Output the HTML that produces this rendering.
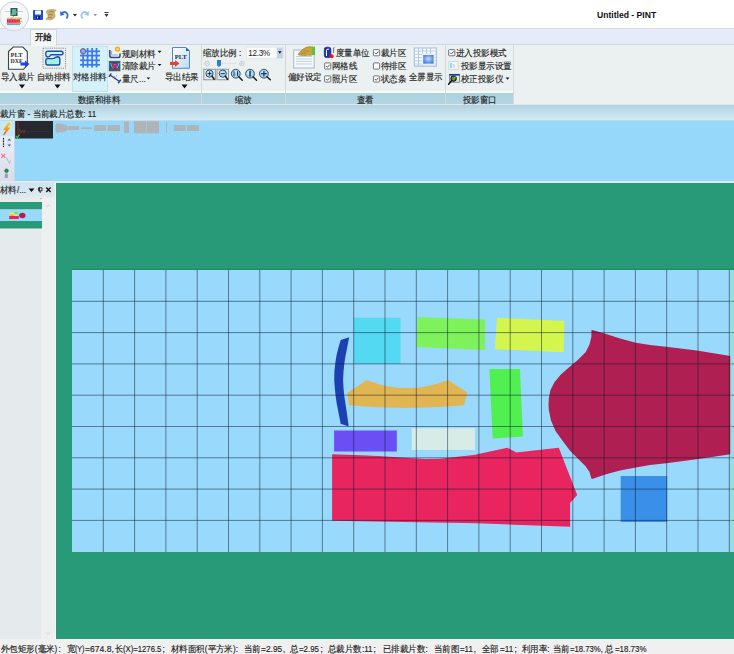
<!DOCTYPE html>
<html><head><meta charset="utf-8">
<style>
*{margin:0;padding:0;box-sizing:border-box}
html,body{width:734px;height:654px;overflow:hidden;background:#f0f0f0}
body{position:relative;font-family:"Liberation Sans",sans-serif;font-size:11px;color:#222}
.a{position:absolute}
.t{position:absolute;white-space:nowrap;line-height:1}
.r{font-size:8.6px;color:#1e1e1e;-webkit-text-stroke:0.15px #1e1e1e;transform:scaleX(0.94);transform-origin:0 0}
svg{position:absolute;overflow:visible}
</style></head><body>

<div class="a" style="left:0px;top:0px;width:734px;height:28px;background:#ffffff;"></div>
<div class="a" style="left:0px;top:28px;width:734px;height:1px;background:#d6dbe0;"></div>
<div class="a" style="left:0px;top:29px;width:734px;height:15px;background:#e6ebfa;"></div>
<div class="a" style="left:0px;top:44px;width:734px;height:1px;background:#d2d7db;"></div>
<div class="a" style="left:0px;top:45px;width:734px;height:59px;background:#ebf0f1;"></div>
<div class="a" style="left:0px;top:91px;width:513px;height:1.5px;background:#f8fafb;"></div>
<div class="a" style="left:0px;top:92.5px;width:513px;height:11.5px;background:linear-gradient(#a9d3dc,#b3d5e5);"></div>
<div class="a" style="left:0px;top:104px;width:734px;height:1px;background:#dfe7ea;"></div>
<div class="a" style="left:0px;top:105px;width:734px;height:1px;background:#b9cfd9;"></div>
<div class="a" style="left:0px;top:106px;width:734px;height:14px;background:linear-gradient(#b3d4e3,#d2ecf6);"></div>
<div class="a" style="left:0px;top:120px;width:734px;height:1px;background:#c4d8ea;"></div>
<div class="a" style="left:0px;top:121px;width:734px;height:60px;background:#95d8fa;"></div>
<div class="a" style="left:0px;top:181px;width:734px;height:2px;background:#e4e8ec;"></div>
<div class="a" style="left:0px;top:183px;width:56px;height:456px;background:#e5ebec;"></div>
<div class="a" style="left:0px;top:183px;width:54px;height:14px;background:linear-gradient(#cfe3ee,#dfeaf1);"></div>
<div class="a" style="left:41px;top:197px;width:13.5px;height:442px;background:#edf0f1;"></div>
<div class="a" style="left:54.5px;top:183px;width:1px;height:456px;background:#fafcfe;"></div>
<div class="a" style="left:55.5px;top:183px;width:1px;height:456px;background:#5a7a80;"></div>
<div class="a" style="left:56px;top:183px;width:678px;height:456px;background:#299a77;"></div>
<div class="a" style="left:0px;top:639px;width:734px;height:15px;background:#f0f0f0;"></div>
<svg style="left:0;top:0" width="734" height="654" viewBox="0 0 734 654">
<rect x="72" y="268.6" width="662" height="1.4" fill="#1f8c69"/><rect x="72" y="270" width="662" height="282" fill="#99d9fc"/>
<polygon fill="#53d9f2" points="353.8,317.8 400.5,317.8 400.5,363.8 353.8,363.8"/>
<polygon fill="#7ef25b" points="417.7,316.9 485.1,319.4 485.1,350.1 416.4,347"/>
<polygon fill="#d3f54d" points="497,317.8 564.4,321 563.7,352.3 494.8,349.2"/>
<path fill="#1c40b2" d="M340.7,340 L338.3,347.9 L336.4,355.9 L335.2,363.8 L334.4,371.8 L334.2,380 L334.8,388 L335.6,395.9 L336.8,403.9 L338.3,411.8 L340.7,423.8 L348.7,426.5 L346.7,411.8 L345.5,403.9 L344.3,395.9 L343.5,388 L343.1,380 L343.5,371.8 L344.3,363.8 L345.5,355.9 L347.1,347.9 L349.1,337.2 Z"/>
<path fill="#e2b553" d="M347.2,392.9 L366.7,379.9 Q407,396.3 447.8,379.9 L467.4,392.5 L464,405.3 Q406,410.9 349.2,405.3 Z"/>
<polygon fill="#4ff04f" points="489.4,369.1 519.9,369.1 522.9,436.4 492.7,438.6"/>
<polygon fill="#6b4ff5" points="334.1,430.4 396.8,430.4 396.8,451.6 334.1,451.6"/>
<polygon fill="#d8ece7" points="411.7,428.2 475,428.2 475,450 411.7,450"/>
<path fill="#e8255f" d="M332.1,454.2 L355,455 L378.1,455.9 L405,457.8 L425,459 L440,458.8 L460,456.5 L473.8,454.9 L490,451.5 L507.4,447.8 L516.3,452.4 L558.8,447.8 L577.2,494.9 L570.1,503.1 L570.1,526.8 L477.3,523.2 L332.1,520.8 Z"/>
<path fill="#b01f51" d="M591.5,329.7 L605.3,333.8 L620,338.6 L635.8,342.7 L650,345 L666.2,346.8 L696.7,350.5 L730.5,355.9 L730.5,454.2 L696.7,459.3 L666.2,463.3 L650,465 L635.8,467.4 L620,470.5 L605.3,474.5 L592.1,479 L591.4,478.6 L589.5,472.1 L585.6,466.3 L577.8,458.5 L570,450.7 L562.2,440.3 L555.7,431.2 L551.1,420.8 L548.9,410.4 L548.5,405 L548.9,397.8 L550.5,390 L554.4,382.2 L560.9,374.4 L570,366.6 L577.8,360.1 L585.6,352.3 L589.5,344.5 L591.4,336.7 Z"/>
<polygon fill="#3a8fe9" points="620.7,476 667.2,476 667.2,522 620.7,522"/>
<path d="M103.3 270V552M134.6 270V552M165.9 270V552M197.2 270V552M228.5 270V552M259.8 270V552M291.1 270V552M322.4 270V552M353.7 270V552M385.0 270V552M416.3 270V552M447.6 270V552M478.9 270V552M510.2 270V552M541.5 270V552M572.8 270V552M604.1 270V552M635.4 270V552M666.7 270V552M698.0 270V552M729.3 270V552M72 301.3H734M72 332.6H734M72 363.9H734M72 395.2H734M72 426.5H734M72 457.8H734M72 489.1H734M72 520.4H734" stroke="#0c1a30" stroke-opacity="0.5" stroke-width="1" fill="none"/>
<path d="M731 270V552" stroke="#8fe8a8" stroke-width="1"/>
</svg>
<svg style="left:0;top:0" width="120" height="34" viewBox="0 0 120 34">
 <defs><radialGradient id="ab" cx="50%" cy="40%" r="60%"><stop offset="0" stop-color="#ffffff"/><stop offset="1" stop-color="#eef1f4"/></radialGradient></defs>
  <circle cx="14.1" cy="16.3" r="14.6" fill="url(#ab)" stroke="#d0d5d9" stroke-width="1"/>
 <path d="M5 11.5H23" stroke="#a8b4bc" stroke-width="0.6"/>
 <rect x="10.5" y="8" width="7" height="8" fill="#34506a"/>
 <rect x="12" y="9" width="4" height="6" fill="#6aa0c8"/>
 <path d="M11.5 15.5 L14.5 11 L17 12.5" stroke="#40e040" stroke-width="1.4" fill="none"/>
 <path d="M14 16 L11 18.5" stroke="#60d060" stroke-width="0.9"/>
 <path d="M7 18.2H21" stroke="#d8b040" stroke-width="1"/>
 <rect x="7" y="19.2" width="13" height="3.6" fill="#e82050"/>
 <path d="M8 20.3h11M8 21.8h11" stroke="#ff7090" stroke-width="0.5" stroke-dasharray="1.5 1"/>
 <path d="M16 19.5 L22 18.5 M17 22.5 L22.5 21.5" stroke="#d0a040" stroke-width="0.9"/>
 <path d="M6.5 23.5H21" stroke="#c09040" stroke-width="0.8"/>
 <path d="M7 24.6H20" stroke="#3a9ae0" stroke-width="0.9"/>
<rect x="33" y="10" width="10" height="10" rx="1" fill="#1d4fd8"/>
 <rect x="35" y="10.5" width="6" height="4" fill="#ffffff"/>
 <rect x="36" y="16" width="4" height="3" fill="#0a1e60"/>
 <rect x="37" y="16.5" width="1" height="2" fill="#c8d0e8"/>
 <path d="M47 10 Q52 8 57 10 Q54 12 55 14 Q57 17 52 20 Q48 21 45 19 Q49 17 47 14 Q45 12 47 10 Z" fill="#c9b270"/>
 <path d="M49 12 Q52 11 54 12 M48 15 Q51 14 53 15 M48 17.5 Q51 17 52 18" stroke="#8b7440" stroke-width="0.8" fill="none"/>
 <path d="M61 14.5 Q63 11 66 12.5 Q69 14.5 66.5 18.5" stroke="#2a72d8" stroke-width="1.8" fill="none"/>
 <path d="M60 11 L60.5 16 L64.5 14.5 Z" fill="#2a72d8"/>
 <path d="M73 14h4l-2 2.5z" fill="#222"/>
 <path d="M88 14.5 Q86 11 83 12.5 Q80 14.5 82.5 18.5" stroke="#9cc4ee" stroke-width="1.8" fill="none"/>
 <path d="M89 11 L88.5 16 L84.5 14.5 Z" fill="#9cc4ee"/>
 <path d="M93.5 14h3.5l-1.75 2.2z" fill="#8a95a5"/>
 <rect x="104.5" y="12" width="4" height="1" fill="#333"/>
 <path d="M104.5 14h4l-2 3z" fill="#333"/>
</svg>
<div class="t" style="left:597px;top:11px;font-size:8.6px;font-weight:bold;color:#111">Untitled - PINT</div>
<div class="a" style="left:30px;top:29px;width:27px;height:16.5px;background:#f4f6f7;border:1px solid #d1d6da;border-bottom:none"></div>
<div class="t r" style="left:35px;top:33.3px;-webkit-text-stroke:0.35px #111">开始</div>
<div class="a" style="left:200.5px;top:45px;width:1px;height:59px;background:#d5d9db;"></div>
<div class="a" style="left:285px;top:45px;width:1px;height:59px;background:#d5d9db;"></div>
<div class="a" style="left:445px;top:45px;width:1px;height:59px;background:#d5d9db;"></div>
<div class="a" style="left:513px;top:45px;width:1px;height:59px;background:#d5d9db;"></div>
<div class="a" style="left:72px;top:46px;width:36px;height:46px;background:#d5f1fa;border:1px solid #bde2f0"></div>
<div class="t r" style="left:1px;top:72.5px;">导入裁片</div>
<div class="t r" style="left:37px;top:72.5px;">自动排料</div>
<div class="t r" style="left:73px;top:72.5px;">对格排料</div>
<div class="t r" style="left:121.5px;top:49.6px;">规则材料</div>
<div class="t r" style="left:121.5px;top:61.8px;">清除裁片</div>
<div class="t r" style="left:121.5px;top:75.2px;">量尺...</div>
<div class="t r" style="left:164.5px;top:72.5px;">导出结果</div>
<div class="t r" style="left:78px;top:95.5px;">数据和排料</div>
<div class="t r" style="left:203px;top:48.8px;">缩放比例</div>
<div class="t r" style="left:238.5px;top:48.8px;">:</div>
<div class="t r" style="left:234.5px;top:95.5px;">缩放</div>
<div class="t r" style="left:288px;top:73px;">偏好设定</div>
<div class="t r" style="left:336px;top:49px;">度量单位</div>
<div class="t r" style="left:332px;top:62px;">网格线</div>
<div class="t r" style="left:332px;top:75px;">照片区</div>
<div class="t r" style="left:381px;top:49px;">裁片区</div>
<div class="t r" style="left:381px;top:62px;">待排区</div>
<div class="t r" style="left:381px;top:75px;">状态条</div>
<div class="t r" style="left:408.5px;top:73px;">全屏显示</div>
<div class="t r" style="left:357px;top:95.5px;">查看</div>
<div class="t r" style="left:456px;top:49px;">进入投影模式</div>
<div class="t r" style="left:461px;top:62px;">投影显示设置</div>
<div class="t r" style="left:461px;top:75px;">校正投影仪</div>
<div class="t r" style="left:463px;top:95.5px;">投影窗口</div>
<svg style="left:0;top:0" width="734" height="654" viewBox="0 0 734 654"><path d="M19.0 84.5h6l-3.0 4z" fill="#111"/><path d="M54.5 84.5h6l-3.0 4z" fill="#111"/><path d="M181.5 84.5h6l-3.0 4z" fill="#111"/><path d="M157.7 50.8h3.8l-1.9 2.1z" fill="#111"/><path d="M157.7 63.9h3.8l-1.9 2.2z" fill="#111"/><path d="M146.6 77.4h3.6l-1.8 2.2z" fill="#111"/><path d="M505.6 77.5h3.8l-1.9 2.2z" fill="#111"/><path d="M8.5 51.5 L13.3 47 H22.8 L27.3 51.5 V65 L23.5 69.3 H8.5 Z" fill="#fbfcfc" stroke="#3c4548" stroke-width="1.1"/><text x="10.6" y="56.6" font-family="Liberation Serif" font-size="5.6" font-weight="bold" fill="#2a2f33" textLength="12" lengthAdjust="spacingAndGlyphs">PLT</text><text x="10.6" y="62.5" font-family="Liberation Serif" font-size="5.6" font-weight="bold" fill="#2a2f33" textLength="12" lengthAdjust="spacingAndGlyphs">DXF</text><path d="M20.5 62.6 h4.5 v-2 l4.5 3.5 l-4.5 3.5 v-2 h-4.5 z" fill="#1e3ef0"/><rect x="43" y="48.2" width="22.5" height="20" fill="none" stroke="#8d9480" stroke-width="1" stroke-dasharray="1.2 1"/><path d="M47.5 51.2 H61.2 Q63 51.2 63 53 Q63 54.8 61.2 54.8 H51.5 Q50 54.8 49.8 56.3 Q49.5 57 47.5 57 Q45.8 56.8 45.8 54.8 V53 Q45.8 51.2 47.5 51.2 Z" fill="#c8f4ee" stroke="#174ea8" stroke-width="1.4"/><path d="M47.5 58.6 H53 Q54.5 58.5 55.5 57.3 Q56.5 56.8 58 56.8 Q59.8 57 59.8 58.8 V63.2 Q59.8 65 58 65 H47.5 Q45.8 65 45.8 63.2 V60.3 Q45.8 58.6 47.5 58.6 Z" fill="#a6f0e4" stroke="#174ea8" stroke-width="1.4"/><g stroke="#3a78ee" stroke-width="1.75"><path d="M83.1 48V67.5"/><path d="M87.6 48V67.5"/><path d="M92.1 48V67.5"/><path d="M96.5 48V67.5"/><path d="M80 51.3H100"/><path d="M80 55.6H100"/><path d="M80 60.3H100"/><path d="M80 64.8H100"/></g><circle cx="83.1" cy="51.3" r="2.5" fill="#60c0f4" stroke="#8a5a8a" stroke-width="1.1"/><path d="M109.8 50 V55.5 Q109.8 57.6 112 57.6 H118 Q120 57.6 120 55.5 V53.5" fill="none" stroke="#2c4a82" stroke-width="1.5"/><path d="M111.5 51 V55 H118" fill="none" stroke="#8fb2d8" stroke-width="1"/><circle cx="117.5" cy="49" r="2.6" fill="#f5a623"/><circle cx="117.5" cy="49" r="1.2" fill="#ffe070"/><rect x="109.3" y="61.3" width="10.6" height="9.5" fill="#1d4fc0" stroke="#1f6a48" stroke-width="0.9"/><path d="M110.5 63 L113 69 L115 64 L117 69 L119 63" stroke="#40d0f0" stroke-width="1" fill="none"/><path d="M111 62.5 L118.5 70 M118.5 62.5 L111 70" stroke="#f02020" stroke-width="1.4"/><path d="M110 75 L119.5 81.5 M109 76.8 L111.2 73.3 M118.2 83.2 L120.8 79.8" stroke="#24408a" stroke-width="1.4" fill="none"/><path d="M114 76.5 L115.5 77.5 M116 75.5 L117 76.2" stroke="#5a78b8" stroke-width="0.8"/><defs><linearGradient id="eg" x1="0" y1="0" x2="1" y2="1"><stop offset="0" stop-color="#ffffff"/><stop offset="1" stop-color="#b8dcf4"/></linearGradient></defs><path d="M172.5 47.5 H186 L189.5 51 V68.3 H172.5 Z" fill="url(#eg)" stroke="#5a86c0" stroke-width="1"/><path d="M186 47.5 V51 H189.5 Z" fill="#2a5aa8"/><text x="174.8" y="58.8" font-family="Liberation Serif" font-size="6" font-weight="bold" fill="#2a2f33" textLength="12" lengthAdjust="spacingAndGlyphs">PLT</text><path d="M170 62 h5 v-2 l4.5 3.5 l-4.5 3.5 v-2 h-5 z" fill="#ef3b3b"/><rect x="246.5" y="47.2" width="36.5" height="11" fill="#fbfcfc" stroke="#e0e4e6" stroke-width="0.8"/><rect x="276.8" y="47.7" width="6" height="10.6" fill="#c3d2ea"/><path d="M278.0 51.3h3.6l-1.8 2.4z" fill="#111"/><circle cx="207.2" cy="63.6" r="2.3" fill="none" stroke="#b8bcc0" stroke-width="0.7"/><path d="M206.2 63.6h2" stroke="#b8bcc0" stroke-width="0.6"/><circle cx="241.9" cy="63.6" r="2.3" fill="none" stroke="#b8bcc0" stroke-width="0.7"/><path d="M240.9 63.6h2M241.9 62.6v2" stroke="#b8bcc0" stroke-width="0.6"/><path d="M222 63.6 H236" stroke="#d8dcdf" stroke-width="0.8"/><path d="M217 60 H221 V65.5 L219 67 L217 65.5 Z" fill="#2a7ae8"/><rect x="203.8" y="69.2" width="11.5" height="10.6" fill="#e6ebef" stroke="#868b90" stroke-width="0.9"/><rect x="217" y="69.2" width="11.5" height="10.6" fill="#e6ebef" stroke="#868b90" stroke-width="0.9"/><circle cx="209.5" cy="73.6" r="3.6" fill="#a8d6f0" stroke="#2c4c6c" stroke-width="1"/><circle cx="208.5" cy="72.6" r="1.62" fill="#e0f4fc" opacity="0.7"/><path d="M212.02 76.11999999999999 L214.2 79.2" stroke="#1a1a1a" stroke-width="1.5" stroke-linecap="round"/><path d="M207.5 73.6h4M209.5 71.6v4" stroke="#1c3450" stroke-width="1"/><circle cx="222.8" cy="73.6" r="3.6" fill="#a8d6f0" stroke="#2c4c6c" stroke-width="1"/><circle cx="221.8" cy="72.6" r="1.62" fill="#e0f4fc" opacity="0.7"/><path d="M225.32000000000002 76.11999999999999 L227.4 79.2" stroke="#1a1a1a" stroke-width="1.5" stroke-linecap="round"/><path d="M220.8 73.6h4" stroke="#1c3450" stroke-width="1"/><circle cx="235.8" cy="73.7" r="4.4" fill="#a8d6f0" stroke="#2c4c6c" stroke-width="1"/><circle cx="234.8" cy="72.7" r="1.9800000000000002" fill="#e0f4fc" opacity="0.7"/><path d="M238.88000000000002 76.78 L242.2 80.2" stroke="#1a1a1a" stroke-width="1.5" stroke-linecap="round"/><path d="M234.0 71.2v5M237.60000000000002 71.2v5" stroke="#1c3450" stroke-width="1"/><circle cx="235.8" cy="72.9" r="0.4" fill="#1c3450"/><circle cx="235.8" cy="74.7" r="0.4" fill="#1c3450"/><circle cx="250" cy="73.7" r="4.4" fill="#a8d6f0" stroke="#2c4c6c" stroke-width="1"/><circle cx="249" cy="72.7" r="1.9800000000000002" fill="#e0f4fc" opacity="0.7"/><path d="M253.08 76.78 L256.5 80.2" stroke="#1a1a1a" stroke-width="1.5" stroke-linecap="round"/><path d="M250 70.7v6" stroke="#1c3450" stroke-width="1.5"/><circle cx="263.9" cy="73.7" r="4.4" fill="#a8d6f0" stroke="#2c4c6c" stroke-width="1"/><circle cx="262.9" cy="72.7" r="1.9800000000000002" fill="#e0f4fc" opacity="0.7"/><path d="M266.97999999999996 76.78 L270.3 79.8" stroke="#1a1a1a" stroke-width="1.5" stroke-linecap="round"/><path d="M261.09999999999997 73.7h5.6M263.9 70.9v5.6" stroke="#1c3450" stroke-width="1.3"/><rect x="293.6" y="50" width="20.6" height="18" fill="#f6f9fb" stroke="#b4c4cc" stroke-width="1.2"/><path d="M296 56.5h16M296 59h16M296 61.5h16M296 64h16" stroke="#b9cfe0" stroke-width="0.9"/><path d="M298.2 54.6 Q298.5 52.5 301 51 L303.5 48.8 Q306 47 309 46.8 L312.5 46.8 V55 Q310 55.6 307.5 55.2 Q305.5 56 303.5 55.4 Q300.5 56 298.2 54.6 Z" fill="#c9a43c" stroke="#8c6c22" stroke-width="0.5"/><path d="M301 53.5 Q304 52.8 306 53.5 M303.5 51.2 Q306.5 50.5 309 51.5" stroke="#8c6c22" stroke-width="0.5" fill="none"/><rect x="312.5" y="46.7" width="2.5" height="8.3" fill="#3ccf3c"/><rect x="324.3" y="47.2" width="6.6" height="10.4" rx="2.2" fill="#1c34b0" stroke="#0c1a70" stroke-width="0.6"/><path d="M326.5 56 V50.2 Q326.5 49.2 328 49.2 H329" stroke="#ffffff" stroke-width="1" fill="none"/><circle cx="331.6" cy="56.2" r="2" fill="#ee1133"/><path d="M333.6 49 Q333.3 47.3 334.6 47.2 M333.6 49 V53" stroke="#222" stroke-width="0.6" fill="none"/><rect x="324.6" y="62.9" width="6.2" height="6.2" rx="0.8" fill="#f8f9fa" stroke="#5a6066" stroke-width="0.85"/><path d="M326.1 66.0 L327.4 67.3 L329.6 64.7" stroke="#3a3f44" stroke-width="0.85" fill="none"/><rect x="324.6" y="75.89999999999999" width="6.2" height="6.2" rx="0.8" fill="#f8f9fa" stroke="#5a6066" stroke-width="0.85"/><path d="M326.1 79.0 L327.4 80.3 L329.6 77.7" stroke="#3a3f44" stroke-width="0.85" fill="none"/><rect x="373.40000000000003" y="49.6" width="6.2" height="6.2" rx="0.8" fill="#f8f9fa" stroke="#5a6066" stroke-width="0.85"/><path d="M374.90000000000003 52.7 L376.2 54 L378.40000000000003 51.4" stroke="#3a3f44" stroke-width="0.85" fill="none"/><rect x="373.40000000000003" y="62.9" width="6.2" height="6.2" rx="0.8" fill="#f8f9fa" stroke="#5a6066" stroke-width="0.85"/><rect x="373.40000000000003" y="75.89999999999999" width="6.2" height="6.2" rx="0.8" fill="#f8f9fa" stroke="#5a6066" stroke-width="0.85"/><path d="M374.90000000000003 79.0 L376.2 80.3 L378.40000000000003 77.7" stroke="#3a3f44" stroke-width="0.85" fill="none"/><rect x="448.6" y="49.6" width="6.2" height="6.2" rx="0.8" fill="#f8f9fa" stroke="#5a6066" stroke-width="0.85"/><path d="M450.1 52.7 L451.4 54 L453.6 51.4" stroke="#3a3f44" stroke-width="0.85" fill="none"/><rect x="414.3" y="48" width="22" height="18" fill="#ffffff" stroke="#9dbce0" stroke-width="1"/><path d="M414.5 51h22M414.5 54.3h22M414.5 57.6h22M414.5 60.9h22M414.5 64h22M418.5 48v18M422.5 48v18M426.5 48v6M430.5 48v6" stroke="#a8c6e6" stroke-width="0.9"/><defs><radialGradient id="fs" cx="50%" cy="45%" r="65%"><stop offset="0" stop-color="#c8e0fc"/><stop offset="1" stop-color="#2f6ee4"/></radialGradient></defs><rect x="422" y="53.8" width="12.8" height="11" fill="#f4f8ff" stroke="#dbe8f8" stroke-width="0.6"/><rect x="423.2" y="55" width="10.4" height="8.6" fill="url(#fs)"/><path d="M414 66.5h22.5" stroke="#b8c8d8" stroke-width="0.8"/><rect x="448.8" y="61.5" width="9.4" height="8" fill="#f3f6f8" stroke="#c8d2d8" stroke-width="0.8"/><path d="M451 63v5" stroke="#38d8e8" stroke-width="1.3"/><path d="M454 64v4" stroke="#e8b8d0" stroke-width="1.3"/><rect x="449.5" y="74.3" width="10" height="8" fill="#dfe8f0" stroke="#6a7a90" stroke-width="0.8"/><rect x="449.2" y="74" width="10.6" height="1.6" fill="#1a3aa0"/><circle cx="453.6" cy="78.6" r="2.6" fill="#5a9a30" stroke="#151515" stroke-width="1.1"/><path d="M451.6 80.6 L448.6 84.2" stroke="#111" stroke-width="1.5" stroke-linecap="round"/><path d="M454 77.5 L456 76.8" stroke="#9be050" stroke-width="0.8"/></svg>
<div class="t t" style="left:248.3px;top:49.8px;font-size:8.2px;color:#1a1a1a;letter-spacing:-0.35px">12.3%</div>
<svg style="left:0;top:0" width="734" height="654" viewBox="0 0 734 654"><defs><linearGradient id="tb" x1="0" y1="0" x2="0" y2="1"><stop offset="0" stop-color="#f4f6fa"/><stop offset="1" stop-color="#d8dcec"/></linearGradient></defs><rect x="0" y="121" width="14.5" height="60" fill="url(#tb)"/><rect x="0" y="121" width="14.5" height="15.5" fill="#c9e8f5"/><path d="M14.5 121V181" stroke="#c8d4e4" stroke-width="0.8"/><defs><linearGradient id="lt" x1="0" y1="0" x2="0" y2="1"><stop offset="0" stop-color="#ffd020"/><stop offset="0.5" stop-color="#f89a18"/><stop offset="1" stop-color="#e84018"/></linearGradient></defs><path d="M7.8 122.8 L10.8 122.8 L7.6 127.6 L10.4 127.6 L4 135.2 L3.2 134.8 L5.8 130 L3.2 130 Z" fill="url(#lt)"/><path d="M3.5 138v9" stroke="#111" stroke-width="1.2" stroke-dasharray="1.6 1"/><rect x="7" y="137.5" width="4.5" height="10" fill="#dce8f8"/><path d="M7.5 140.5 l1.8 -2 l1.8 2 z M7.5 144.5 l1.8 2 l1.8 -2 z" fill="#2a60c8"/><path d="M1.3 153.8 L5.3 157.8 M5.3 153.8 L1.3 157.8" stroke="#e8709a" stroke-width="1.2"/><path d="M6 157 L9.5 163.5 L10.5 160.5" stroke="#a8b0b8" stroke-width="0.8" fill="none"/><circle cx="6.5" cy="170.7" r="1.8" fill="#18a048" stroke="#0a3a20" stroke-width="0.5"/><rect x="4.8" y="173.5" width="3" height="4.5" fill="#98a0a8"/><rect x="15.2" y="121" width="37.8" height="17.5" fill="#25292d"/><path d="M18 122 V137" stroke="#b02828" stroke-width="0.8"/><path d="M19 129 L21 133 L22.5 130 L24 133 L25 130" stroke="#b83030" stroke-width="0.7" fill="none"/><path d="M16 136 L17.5 137.8 L19.5 134.5" stroke="#40c040" stroke-width="1.2" fill="none"/><path d="M17 131.5H50" stroke="#34393e" stroke-width="0.6"/><path d="M56 123.5 Q61 123 67 125 V131 Q61 133 56 132.5 Q54.5 128 56 123.5 Z" fill="#adb5b8"/><rect x="67.5" y="126" width="11.5" height="4" fill="#adb5b8"/><path d="M81 127.3 H92 V129 H81 Z" fill="#adb5b8"/><rect x="94" y="125" width="12" height="6" fill="#adb5b8"/><rect x="107.5" y="125" width="12.5" height="6" fill="#adb5b8"/><rect x="124" y="121.5" width="5" height="11.5" fill="#adb5b8"/><rect x="134" y="121.2" width="12" height="12" fill="#adb5b8"/><rect x="146.5" y="121.2" width="12.5" height="12" fill="#adb5b8"/><rect x="166" y="122" width="1" height="11" fill="#adb5b8"/><rect x="173.8" y="125" width="11.8" height="6" fill="#adb5b8"/><rect x="187" y="125" width="12" height="6" fill="#adb5b8"/><path d="M56 135.5H200" stroke="#c4e4f4" stroke-width="0.8" stroke-dasharray="1 6"/><path d="M28.5 188.5h6l-3 3.5z" fill="#111"/><path d="M39.5 187.5v4M38.5 187.8h3.5v3h-3.5z M40.2 191v2" stroke="#222" stroke-width="0.9" fill="none"/><path d="M46.2 187.5 L50.6 192 M50.6 187.5 L46.2 192" stroke="#111" stroke-width="1.3"/><circle cx="41" cy="198.5" r="0.6" fill="#7a8aa8"/><rect x="0" y="202" width="42" height="7.5" fill="#299a77"/><rect x="0" y="209.5" width="42" height="11.5" fill="#9ad9f9"/><rect x="0" y="221" width="42" height="7.5" fill="#299a77"/><rect x="9.5" y="212.5" width="8" height="3" fill="#d8f060"/><rect x="10" y="214.5" width="4" height="1.5" fill="#e2b553"/><rect x="9.2" y="216" width="9.5" height="3" fill="#e8255f"/><ellipse cx="22.3" cy="215.5" rx="3.2" ry="2.8" fill="#b01f51"/><rect x="14.5" y="212" width="3" height="2" fill="#4ff04f"/><path d="M46.5 207 L48.5 204.5 L50.5 207" stroke="#c4c8cc" stroke-width="0.6" fill="none"/><path d="M46 632 L48 634.5 L50 632" stroke="#c4c8cc" stroke-width="0.6" fill="none"/></svg>
<div class="t r" style="left:0px;top:109.5px;">裁片窗 - 当前裁片总数: 11</div>
<div class="t r" style="left:0px;top:186px;">材料/...</div>
<div class="t r" style="left:1.4px;top:644.5px;">外包矩形(毫米)</div>
<div class="t r" style="left:58.5px;top:644.5px;font-size:8.3px;transform:none">:</div>
<div class="t r" style="left:66.5px;top:644.5px;">宽</div>
<div class="t r" style="left:75.3px;top:644.5px;font-size:8.3px;transform:scaleX(0.850)">(Y)</div>
<div class="t r" style="left:84.5px;top:644.5px;font-size:8.3px;transform:scaleX(1.032)">=674.8,</div>
<div class="t r" style="left:114.8px;top:644.5px;">长</div>
<div class="t r" style="left:123.4px;top:644.5px;font-size:8.3px;transform:scaleX(0.930)">(X)=1276.5</div>
<div class="t r" style="left:162.6px;top:644.5px;font-size:8.3px;transform:none">;</div>
<div class="t r" style="left:171px;top:644.5px;">材料面积(平方米)</div>
<div class="t r" style="left:235.8px;top:644.5px;font-size:8.3px;transform:none">:</div>
<div class="t r" style="left:244.3px;top:644.5px;">当前</div>
<div class="t r" style="left:261.2px;top:644.5px;font-size:8.3px;transform:scaleX(1.010)">=2.95</div>
<div class="t r" style="left:283px;top:644.5px;font-size:8.3px;transform:none">,</div>
<div class="t r" style="left:290.2px;top:644.5px;">总</div>
<div class="t r" style="left:299.3px;top:644.5px;font-size:8.3px;transform:scaleX(0.952)">=2.95</div>
<div class="t r" style="left:320.5px;top:644.5px;font-size:8.3px;transform:none">;</div>
<div class="t r" style="left:328.4px;top:644.5px;">总裁片数</div>
<div class="t r" style="left:362.2px;top:644.5px;font-size:8.3px;transform:scaleX(0.971)">:11</div>
<div class="t r" style="left:373.4px;top:644.5px;font-size:8.3px;transform:none">;</div>
<div class="t r" style="left:382.7px;top:644.5px;">已排裁片数</div>
<div class="t r" style="left:425.6px;top:644.5px;font-size:8.3px;transform:none">:</div>
<div class="t r" style="left:434.2px;top:644.5px;">当前图</div>
<div class="t r" style="left:460px;top:644.5px;font-size:8.3px;transform:scaleX(0.950)">=11</div>
<div class="t r" style="left:473.8px;top:644.5px;font-size:8.3px;transform:none">,</div>
<div class="t r" style="left:482.3px;top:644.5px;">全部</div>
<div class="t r" style="left:500.3px;top:644.5px;font-size:8.3px;transform:scaleX(0.980)">=11</div>
<div class="t r" style="left:514.5px;top:644.5px;font-size:8.3px;transform:none">;</div>
<div class="t r" style="left:522.3px;top:644.5px;">利用率</div>
<div class="t r" style="left:547.3px;top:644.5px;font-size:8.3px;transform:none">:</div>
<div class="t r" style="left:553px;top:644.5px;">当前</div>
<div class="t r" style="left:570px;top:644.5px;font-size:8.3px;transform:scaleX(0.929)">=18.73%,</div>
<div class="t r" style="left:605.3px;top:644.5px;">总</div>
<div class="t r" style="left:614.7px;top:644.5px;font-size:8.3px;transform:scaleX(0.952)">=18.73%</div>
</body></html>
